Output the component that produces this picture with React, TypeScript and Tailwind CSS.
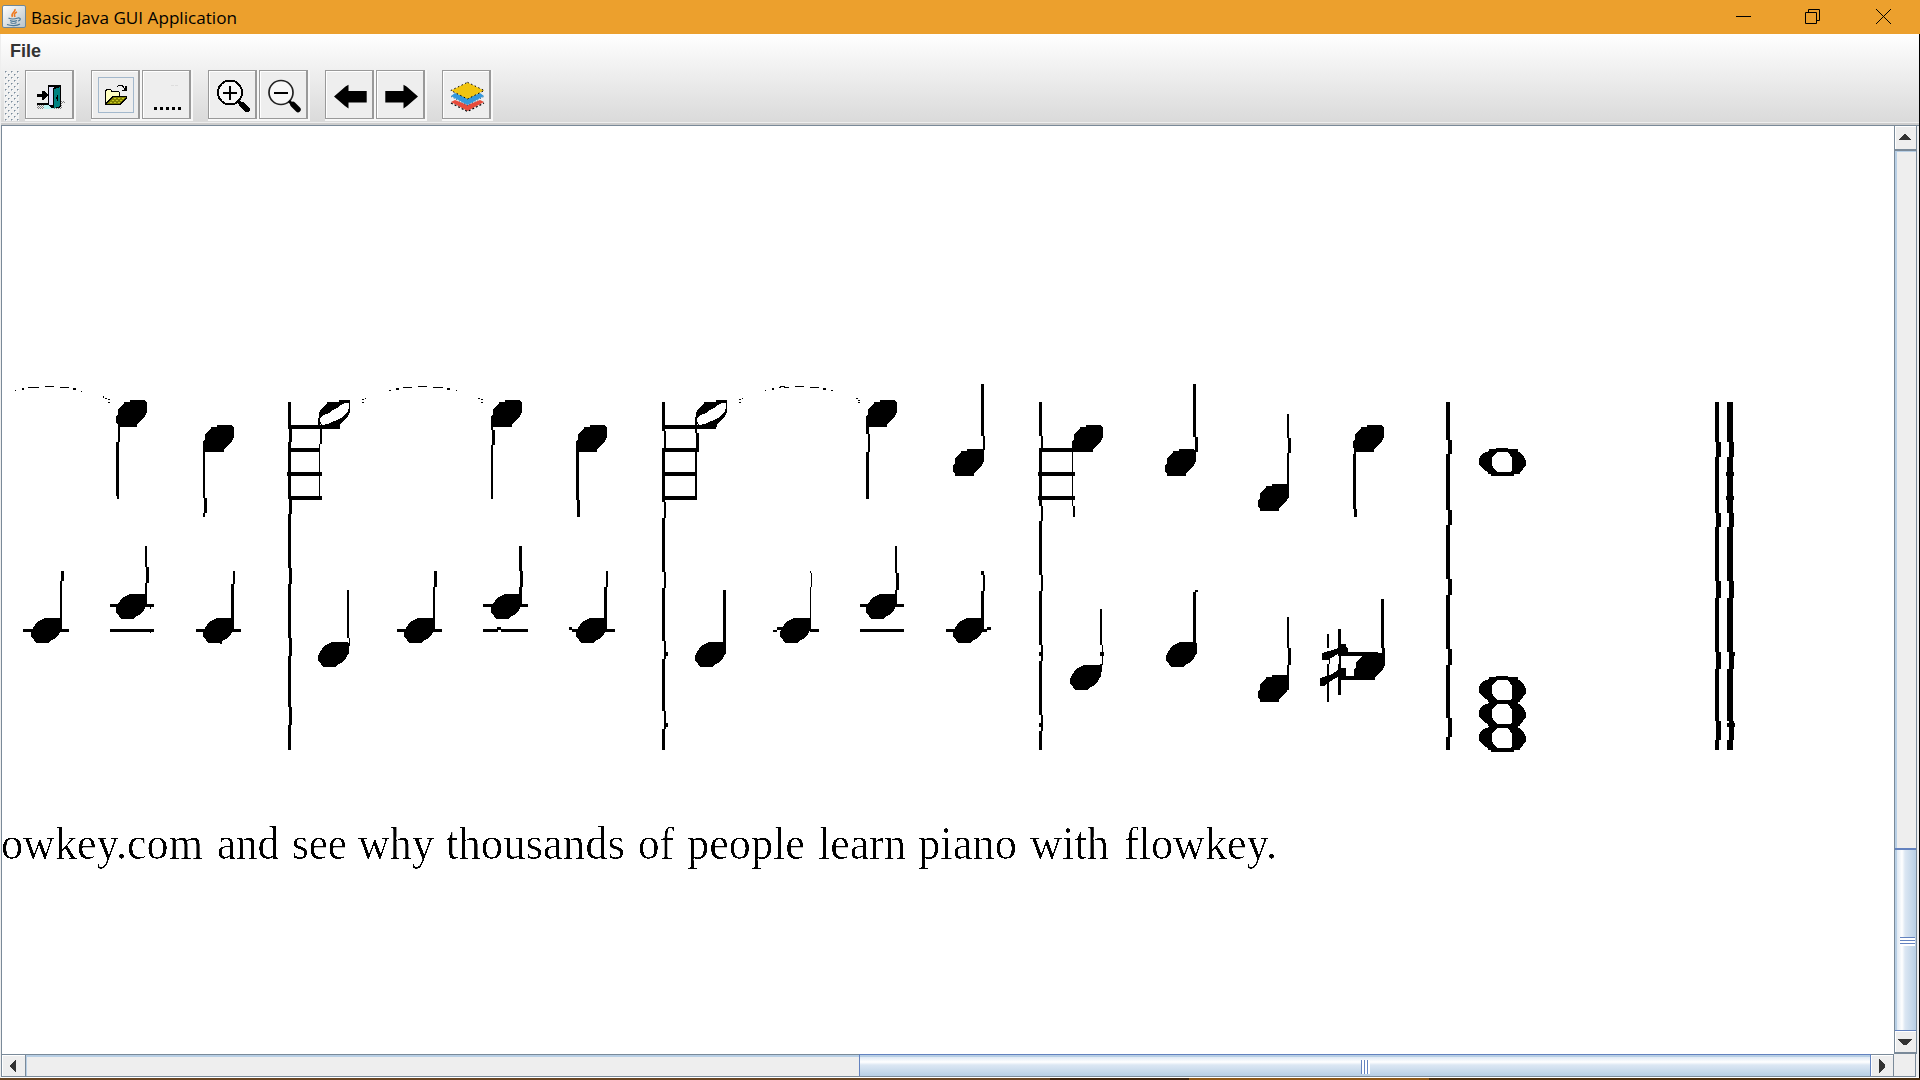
import React from "react";

type Rect = [number, number, number, number];

const bars: { x: number; w: number; dx: number; jw: number; jogs: [number, number][] }[] = [
  { x: 288, w: 3, dx: 1, jw: 3, jogs: [[429, 442], [499, 514], [568, 584], [638, 656], [707, 725]] },
  { x: 662, w: 3, dx: 2, jw: 2, jogs: [[431, 448], [502, 518], [572, 588], [641, 659], [711, 729]] },
  { x: 1039, w: 3, dx: 2, jw: 2, jogs: [[436, 449], [506, 521], [575, 591], [645, 661], [715, 731]] },
  { x: 1446, w: 4, dx: 2, jw: 4, jogs: [[440, 454], [510, 525], [579, 595], [649, 665], [718, 737]] },
  { x: 1715, w: 4, dx: 1, jw: 5, jogs: [[442, 457], [513, 527], [581, 598], [652, 669], [721, 740]] },
  { x: 1727, w: 6, dx: 2, jw: 5, jogs: [[442, 457], [513, 527], [581, 598], [652, 669], [721, 740]] },
];

function barRects(): Rect[] {
  const out: Rect[] = [];
  for (const b of bars) {
    let y = 402;
    for (const [a, z] of b.jogs) {
      out.push([b.x, y, b.w, a - y]);
      out.push([b.x + b.dx, a, b.jw, z - a]);
      y = z;
    }
    out.push([b.x, y, b.w, 750 - y]);
  }
  return out;
}

/* left, top, right, bottom */
const strokes: Rect[] = [
  [118, 424, 120, 442], [116, 442, 119, 496], [117, 496, 119, 499],
  [203, 442, 205, 498], [204, 498, 207, 513], [203, 513, 205, 517],
  [289, 425, 340, 429], [289, 448, 320, 452], [287, 472, 322, 476], [289, 496, 322, 500],
  [318, 418, 320, 428], [320, 428, 322, 444], [319, 444, 320, 496],
  [61, 571, 64, 581], [60, 581, 62, 630], [23, 629, 69, 632],
  [145, 546, 147, 567], [146, 567, 149, 583], [145, 583, 147, 604], [110, 604, 154, 607], [110, 629, 154, 632],
  [150, 606, 151, 609], [150, 631, 151, 633],
  [233, 571, 235, 584], [231, 584, 234, 630], [196, 629, 241, 632], [220, 640, 222, 644],
  [347, 590, 349, 638], [349, 638, 350, 646],
  [491, 418, 493, 430], [492, 430, 495, 445], [491, 445, 493, 499],
  [576, 446, 579, 500], [577, 500, 580, 517],
  [434, 571, 437, 587], [433, 587, 435, 630], [397, 629, 442, 632],
  [519, 546, 522, 571], [520, 571, 523, 587], [519, 587, 522, 604], [483, 604, 528, 607],
  [483, 629, 498, 632], [497, 627, 501, 630], [501, 629, 528, 632],
  [606, 571, 608, 587], [604, 587, 607, 630], [572, 629, 615, 632], [569, 627, 572, 630],
  [664, 425, 716, 429], [663, 448, 699, 452], [663, 472, 697, 476], [663, 496, 697, 500],
  [695, 417, 697, 433], [696, 433, 699, 448], [695, 448, 697, 500],
  [866, 417, 869, 434], [868, 434, 870, 452], [866, 452, 869, 499],
  [981, 384, 984, 436], [983, 436, 985, 450], [981, 449, 984, 462],
  [723, 590, 726, 645], [810, 571, 811, 573], [811, 573, 812, 587], [810, 587, 811, 625],
  [773, 630, 777, 632], [777, 627, 783, 630], [810, 629, 819, 632],
  [895, 546, 897, 573], [896, 573, 899, 590], [895, 590, 897, 604], [860, 604, 904, 607], [860, 629, 904, 632],
  [981, 571, 984, 575], [983, 575, 985, 591], [981, 591, 984, 630], [946, 629, 987, 632], [987, 627, 991, 630],
  [1039, 448, 1075, 452], [1038, 472, 1075, 476], [1038, 496, 1075, 500],
  [1072, 441, 1073, 506], [1073, 506, 1075, 517],
  [1193, 384, 1196, 437], [1195, 437, 1198, 452], [1193, 450, 1196, 462],
  [1287, 414, 1289, 438], [1288, 438, 1291, 453], [1287, 453, 1289, 498],
  [1354, 441, 1356, 454], [1353, 454, 1356, 509], [1354, 509, 1357, 517],
  [1100, 609, 1102, 645], [1102, 645, 1103, 665], [1100, 652, 1104, 656], [1100, 664, 1102, 672],
  [1195, 590, 1198, 592], [1193, 592, 1196, 646],
  [1287, 617, 1289, 648], [1288, 648, 1291, 665], [1287, 665, 1289, 690],
  [1381, 599, 1384, 648], [1382, 648, 1385, 665],
  [1338, 652, 1378, 656], [1338, 676, 1373, 680],
  [1327, 634, 1329, 648], [1329, 656, 1330, 664], [1327, 664, 1329, 702],
  [1338, 629, 1341, 655], [1339, 655, 1341, 664], [1338, 664, 1341, 695],
  [666, 652, 668, 656], [666, 723, 668, 727],
  [1039, 652, 1041, 656], [1039, 723, 1041, 727], [1038, 472, 1040, 476],
  [1726, 472, 1734, 476], [1726, 496, 1734, 500], [1733, 652, 1735, 656], [1727, 723, 1735, 727],
];

const slurs: Rect[] = [
  [15, 390, 16, 391], [22, 388, 24, 390], [28, 387, 39, 388], [45, 386, 54, 387], [60, 387, 69, 388], [73, 388, 76, 390], [81, 391, 82, 392],
  [103, 396, 104, 398], [105, 398, 107, 399], [108, 399, 110, 400], [108, 402, 110, 403],
  [365, 398, 366, 399], [362, 399, 364, 400], [362, 402, 364, 403],
  [389, 390, 391, 391], [396, 388, 399, 390], [403, 387, 412, 388], [418, 386, 427, 387], [433, 387, 443, 388], [447, 388, 450, 390], [456, 390, 457, 391],
  [478, 398, 480, 399], [481, 399, 483, 400], [481, 402, 483, 403],
  [742, 398, 743, 399], [739, 399, 741, 400], [739, 402, 741, 403],
  [765, 390, 766, 391], [772, 388, 774, 390], [779, 387, 781, 388], [780, 386, 785, 387], [784, 387, 789, 388], [795, 386, 804, 387], [810, 387, 819, 388], [823, 388, 826, 390], [831, 390, 833, 391],
  [856, 398, 858, 399], [858, 400, 860, 401], [858, 402, 860, 403],
];

/* left / top of the solid note heads */
const upperHeads: [number, number][] = [
  [116, 400], [203, 425], [491, 400], [576, 425], [866, 400], [953, 449], [1072, 425], [1165, 449], [1258, 484], [1353, 425],
  [1258, 675], [1354, 653],
];
const lowerHeads: [number, number][] = [
  [31, 618], [116, 594], [203, 618], [318, 642], [404, 618], [491, 594], [576, 618], [695, 642], [780, 618], [866, 594], [953, 618],
  [1070, 665], [1166, 642],
];

const UPPER_HEAD = "M0 17 L2 14 V9 L5 6 L8 4 V2 H14 V0 H28 L31 3 V12 L29 16 L26 19 L24 22 L21 24 V27 H2 V25 L0 23 Z";
const LOWER_HEAD = "M0 14 L2 10 L4 7 L6 4 L10 2 L14 0 H29 L31 2 V11 L29 14 L27 18 L23 21 L19 23 L17 25 H5 L3 22 L0 19 Z";

const lyrics: [string, number, number][] = [
  ["owkey.com", 1, 203], ["and", 217, 279], ["see", 292, 347], ["why", 358, 434], ["thousands", 446, 625],
  ["of", 638, 674], ["people", 687, 805], ["learn", 818, 906], ["piano", 918, 1017], ["with", 1030, 1109], ["flowkey.", 1124, 1277],
];

function WholeNote({ y }: { y: number }) {
  return (
    <path
      fillRule="evenodd"
      transform={`translate(1479 ${y})`}
      d="M10 1 H17 V0 H29 V1 H39 V4 L42 5 L45 9 L47 13 V17 L44 21 L41 24 V26 H35 V28 H12 V26 H9 V24 L5 22 L1 18 L0 16 V13 L1 8 L5 5 L10 3 Z M18 4 L15 7 L13 10 V16 L14 19 L16 22 L19 24 H32 L33 22 V10 L31 7 L28 4 Z"
    />
  );
}

function HalfNote({ x }: { x: number }) {
  return (
    <path
      fillRule="evenodd"
      transform={`translate(${x} 400)`}
      d="M0 18 V13 L2 9 L5 6 L8 4 V2 H20 V0 H31 V12 L29 16 L26 20 L21 24 V27 H4 L0 22 Z M1 21 L3 25 L9 24 L13 22 L18 20 L22 18 L26 14 L29 11 L30 8 V3 L26 3 L22 5 L18 8 L14 10 L10 13 L5 15 L1 18 Z"
    />
  );
}

function Box({ r }: { r: Rect }) {
  return <rect x={r[0]} y={r[1]} width={r[2] - r[0]} height={r[3] - r[1]} />;
}

function Score() {
  return (
    <svg className="block shrink-0" width={1892} height={928} viewBox="2 126 1892 928" shapeRendering="crispEdges">
      <defs>
        <filter id="bitone" x="-2%" y="-10%" width="104%" height="120%" colorInterpolationFilters="sRGB">
          <feComponentTransfer>
            <feFuncA type="linear" slope="8" intercept="-5.6" />
          </feComponentTransfer>
        </filter>
      </defs>
      {barRects().map((r, i) => (
        <rect key={i} x={r[0]} y={r[1]} width={r[2]} height={r[3]} />
      ))}
      {strokes.map((r, i) => <Box key={i} r={r} />)}
      {slurs.map((r, i) => <Box key={i} r={r} />)}
      {upperHeads.map(([x, y], i) => (
        <path key={i} d={UPPER_HEAD} transform={`translate(${x} ${y})`} />
      ))}
      {lowerHeads.map(([x, y], i) => (
        <path key={i} d={LOWER_HEAD} transform={`translate(${x} ${y})`} />
      ))}
      <HalfNote x={319} />
      <HalfNote x={696} />
      <path d="M1322 653 L1336 649 L1342 644 H1346 V647 L1348 648 V652 H1341 L1328 660 H1322 Z M1320 678 L1332 674 L1341 668 H1346 V676 H1339 L1328 683 L1324 686 H1320 Z" />
      <WholeNote y={448} />
      <WholeNote y={676} />
      <WholeNote y={700} />
      <WholeNote y={724} />
      <text y={859} fontSize={46} filter="url(#bitone)" style={{ fontFamily: '"Liberation Serif", serif' }}>
        {lyrics.map(([word, from, to]) => (
          <tspan key={word} x={from} textLength={to - from} lengthAdjust="spacingAndGlyphs">
            {word}
          </tspan>
        ))}
      </text>
    </svg>
  );
}

function ToolButton({ children }: { children?: React.ReactNode }) {
  return (
    <div className="h-[51px] w-[51px] shrink-0 border-b-2 border-r-2 border-[#f8f8f8]">
      <div className="flex h-[49px] w-[49px] items-center justify-center border border-r-2 border-[#999] bg-[#eee] shadow-[inset_1px_1px_0_#fff]">
        {children}
      </div>
    </div>
  );
}

function Pic({ children, smooth }: { children: React.ReactNode; smooth?: boolean }) {
  return (
    <svg className="block shrink-0" width={46} height={46} viewBox="0 0 46 46" shapeRendering={smooth ? "auto" : "crispEdges"}>
      {children}
    </svg>
  );
}

function ExitIcon() {
  return (
    <Pic>
      <defs>
        <pattern id="stipple" width="2" height="2" patternUnits="userSpaceOnUse">
          <path d="M0 0h1v1H0zM1 1h1v1H1z" fill="#808080" />
        </pattern>
      </defs>
      <path d="M11 34H36V31H39V29H30V31H11V37H30V34Z" fill="url(#stipple)" />
      <path d="M11 34H36V37H11Z" fill="url(#stipple)" />
      <path d="M18 33H28V37H18Z" fill="#b8f2f2" />
      <path d="M22 13H34V36H26L22 33Z" fill="#000" />
      <path d="M24 15H28V33H23V15Z" fill="#dfdffc" />
      <path d="M28 17L34 15V34L28 36Z" fill="#008282" />
      <path d="M34 13H35V35H34Z M27 16H28V36H27Z M30 25H32V27H30ZM31 23H32V29H31Z" />
      <path d="M11 31H23V33H11Z M11 22H16V19H18L22 23L18 28H16V25H11Z" />
    </Pic>
  );
}

function OpenIcon() {
  return (
    <div className="ml-px flex h-9 w-9 items-center justify-center border border-[#a3b8cc]">
      <svg className="block" width={34} height={34} viewBox="0 0 34 34" shapeRendering="crispEdges">
        <path d="M6 12H7V11H12V12H13V13H20V14H21V18H28V20L22 27H6Z" />
        <path d="M7 13L8 12H12V14H20V18H13L7 25Z" fill="#ffffc0" />
        <path d="M14 19H27L21 26H8Z" fill="#808000" />
        <path d="M15 20h2v1h-2zM19 20h2v1h-2zM23 20h2v1h-2zM13 22h2v1h-2zM17 22h2v1h-2zM21 22h2v1h-2zM11 24h2v1h-2zM15 24h2v1h-2zM19 24h2v1h-2z" fill="#c8c820" />
        <path d="M18 8H19V7H24V8H25V10H26V8H28V13H23V12H25V10H24V9H23V8H19V9H18Z" />
      </svg>
    </div>
  );
}

function ZoomIcon({ plus }: { plus?: boolean }) {
  return (
    <Pic smooth={!plus}>
      <circle cx={21} cy={20.5} r={12} fill="#f8f8f8" stroke={plus ? "#000" : "#222"} strokeWidth={plus ? 2 : 1.7} />
      <path d="M29 29 L33 33" stroke="#000" strokeWidth={3} />
      <path d="M33 32.500 L38 37.500" stroke="#000" strokeWidth={5.500} strokeLinecap="round" />
      <path d="M14 20h14v2H14z" />
      {plus && <path d="M20 14h2v14h-2z" />}
    </Pic>
  );
}

function ArrowIcon({ right }: { right?: boolean }) {
  return (
    <Pic smooth>
      <path
        transform={right ? "translate(49 0) scale(-1 1)" : undefined}
        d="M8 24.500 L19.500 14.500 L22.500 12.800 V19 H40.700 V30.500 H22.500 V36.500 L19 34 Z"
      />
    </Pic>
  );
}

function LayersIcon() {
  return (
    <Pic smooth>
      <path d="M8 30L12 28L24.500 33L37 28L41 30L24.500 39Z" fill="#e74c3c" />
      <path d="M8 31L24.500 39.500L41 31" fill="none" stroke="#000" strokeWidth={1.200} strokeDasharray="2 2" />
      <path d="M8 24L12 21L24.500 26L37 21L41 24L24.500 33Z" fill="#3498db" />
      <path d="M8 24.500L24.500 33.500L41 24.500" fill="none" stroke="#175a8a" strokeDasharray="1 2" />
      <path d="M24.500 10.500L41 18.500L24.500 27L8 18.500Z" fill="#f1c40f" />
      <path d="M24.500 10.300L41.200 18.500L24.500 27L7.800 18.500Z" fill="none" stroke="#000" strokeDasharray="1.500 2.500" />
    </Pic>
  );
}

function JavaIcon() {
  return (
    <svg className="block" width={24} height={24} viewBox="0 0 24 24">
      <defs>
        <linearGradient id="tile" x1="0" y1="0" x2="1" y2="1">
          <stop offset="0" stopColor="#fff" />
          <stop offset="1" stopColor="#b9c3c8" />
        </linearGradient>
      </defs>
      <rect x={0.500} y={0.500} width={23} height={22} rx={1.500} fill="url(#tile)" stroke="#6f8796" />
      <path d="M13 4C14 7 8 8 10.500 12M15 7C12 8 12 10 13 12" fill="none" stroke="#ee7a22" strokeWidth={1.600} />
      <path d="M6.500 13C9 14.500 13 14 16 13M16 13C19 12.500 19 15.500 16 16M8 15.500C10 16.500 13 16.500 15 15.500M8.500 17.500C10 18.500 13 18.500 14.500 17.500M5 19.500C9 21 15 21 18 19" fill="none" stroke="#4d7896" strokeWidth={1.200} />
    </svg>
  );
}

function TitleBar() {
  return (
    <div className="flex h-[34px] shrink-0 items-center bg-[#eca02d] text-black">
      <div className="ml-[2px]"><JavaIcon /></div>
      <svg className="ml-[5px] block" width={210} height={34}>
        <text x={0} y={24} fontSize={17} textLength={206} lengthAdjust="spacingAndGlyphs" style={{ fontFamily: '"Open Sans", sans-serif' }}>
          Basic Java GUI Application
        </text>
      </svg>
      <svg className="ml-auto block" width={184} height={34} viewBox="1736 0 184 34" fill="none" stroke="#000">
        <path d="M1736 16.500H1751" />
        <path d="M1805.500 12.500H1816.500V23.500H1805.500ZM1808.500 12V9.500H1819.500V20.500H1817" />
        <path d="M1876 9L1891 24M1891 9L1876 24" />
      </svg>
    </div>
  );
}

function Toolbar() {
  return (
    <div className="flex h-[54px] items-start pl-[3px] pt-[2px]">
      <svg className="mr-[6px] block shrink-0" width={15} height={51} shapeRendering="crispEdges">
        <defs>
          <pattern id="bumps" width="6" height="6" patternUnits="userSpaceOnUse">
            <path d="M0 0h6v6H0z" fill="#f2f2f2" />
            <path d="M1 1h1v1H1zM4 4h1v1H4z" fill="#7a8a99" />
            <path d="M2 1h1v1H2zM1 2h1v1H1zM5 4h1v1H5zM4 5h1v1H4z" fill="#b4bec8" />
            <path d="M2 2h1v1H2zM5 5h1v1H5z" fill="#fff" />
          </pattern>
        </defs>
        <rect width={15} height={51} fill="url(#bumps)" />
      </svg>
      <ToolButton><ExitIcon /></ToolButton>
      <div className="w-[15px]" />
      <ToolButton><OpenIcon /></ToolButton>
      <ToolButton>
        <Pic>
          <path d="M11 35h3v3h-3zM17 35h3v3h-3zM23 35h3v3h-3zM29 35h3v3h-3zM35 35h3v3h-3z" />
          <path d="M28 13h3v1h-3zM32 13h3v1h-3z" fill="#ddd" />
        </Pic>
      </ToolButton>
      <div className="w-[15px]" />
      <ToolButton><ZoomIcon plus /></ToolButton>
      <ToolButton><ZoomIcon /></ToolButton>
      <div className="w-[15px]" />
      <ToolButton><ArrowIcon /></ToolButton>
      <ToolButton><ArrowIcon right /></ToolButton>
      <div className="w-[15px]" />
      <ToolButton><LayersIcon /></ToolButton>
    </div>
  );
}

function VerticalScroll() {
  return (
    <div className="flex w-[23px] shrink-0 flex-col border-l border-r border-[#7a8a99] bg-[#eee]">
      <div className="flex h-[23px] shrink-0 items-center justify-center border-l border-t border-white pr-[2px] pb-[2px]">
        <svg width={12} height={6} shapeRendering="crispEdges"><path d="M0 6L5 0H7L12 6Z" fill="#333" /></svg>
      </div>
      <div className="h-[2px] shrink-0 bg-[#7a8a99]" />
      <div className="flex-1 border-l-2 border-t border-[#b8cfe5]" />
      <div className="flex h-[183px] shrink-0 items-center justify-center border-b border-t-2 border-[#6382bf] bg-[linear-gradient(90deg,#b8cfe5_0px,#b8cfe5_2px,#dfe9f4_2px,#fff_7px,#dce7f3_10px,#b8cfe5_21px)]">
        <div className="ml-[4px] mt-[2px] flex w-[15px] flex-col">
          <div className="h-[3px] border-t border-[#6382bf] bg-white" />
          <div className="h-[3px] border-t border-[#6382bf] bg-white" />
          <div className="h-[3px] border-t border-[#6382bf] bg-white" />
        </div>
      </div>
      <div className="flex h-[21px] shrink-0 items-center justify-center border-l border-t border-white pr-[2px]">
        <svg width={14} height={6} shapeRendering="crispEdges"><path d="M0 0H14L9 6H5Z" fill="#333" /></svg>
      </div>
      <div className="h-[2px] shrink-0 bg-[#7a8a99]" />
    </div>
  );
}

function HorizontalScroll() {
  return (
    <div className="flex h-[23px] w-[1892px] shrink-0 border-b border-t border-[#7a8a99] bg-[#eee]">
      <div className="flex w-[23px] shrink-0 items-center justify-center border-l border-t border-white pr-[3px]">
        <svg width={6} height={14} shapeRendering="crispEdges"><path d="M6 0V14L0 8V6Z" fill="#333" /></svg>
      </div>
      <div className="w-px shrink-0 bg-[#7a8a99]" />
      <div className="flex-1 border-l border-t-2 border-[#b8cfe5]" />
      <div className="-mt-px flex w-[1012px] shrink-0 items-center justify-center border-l border-r border-t border-[#6382bf] bg-[linear-gradient(180deg,#b8cfe5_0px,#b8cfe5_2px,#dfe9f4_2px,#fff_7px,#dce7f3_10px,#b8cfe5_21px)]">
        <div className="ml-px mt-[2px] flex h-[14px]">
          <div className="w-[3px] border-l border-[#6382bf] bg-white" />
          <div className="w-[3px] border-l border-[#6382bf] bg-white" />
          <div className="w-[3px] border-l border-[#6382bf] bg-white" />
        </div>
      </div>
      <div className="flex w-[22px] shrink-0 items-center justify-center border-l border-t border-white pr-[2px]">
        <svg width={6} height={14} shapeRendering="crispEdges"><path d="M0 0L6 6V8L0 14Z" fill="#333" /></svg>
      </div>
      <div className="w-px shrink-0 bg-[#7a8a99]" />
    </div>
  );
}

export default function App() {
  return (
    <div className="flex h-[1080px] w-[1920px] flex-col overflow-hidden bg-[#eee]">
      <TitleBar />
      <div className="flex h-[1044px] shrink-0 flex-col border-l border-r border-l-[#eee] border-r-black">
        <div className="flex h-[88px] shrink-0 flex-col bg-gradient-to-b from-white to-[#dadada]">
          <div className="flex h-[34px] items-center pl-[9px] font-['Liberation_Sans',sans-serif] text-[18px] font-bold leading-none text-[#333]">File</div>
          <Toolbar />
        </div>
        <div className="h-px shrink-0 bg-[#eee]" />
        <div className="h-[2px] shrink-0 bg-[#ccc]" />
        <div className="h-px shrink-0 bg-[#7a8a99]" />
        <div className="mr-[2px] flex h-[928px] shrink-0 border-l border-[#7a8a99] bg-white">
          <Score />
          <VerticalScroll />
        </div>
        <div className="flex h-[23px] shrink-0 border-l border-[#7a8a99]">
          <HorizontalScroll />
          <div className="w-[22px] border-b border-r border-[#7a8a99]" />
        </div>
        <div className="h-px shrink-0 bg-white" />
      </div>
      <div className="flex h-[2px] shrink-0 bg-[#684421]">
        <div className="ml-[1050px] w-[139px] bg-[#3d220c]" />
        <div className="w-[240px] bg-[#8f5815]" />
        <div className="flex-1 bg-[#4b2d0c]" />
      </div>
    </div>
  );
}
